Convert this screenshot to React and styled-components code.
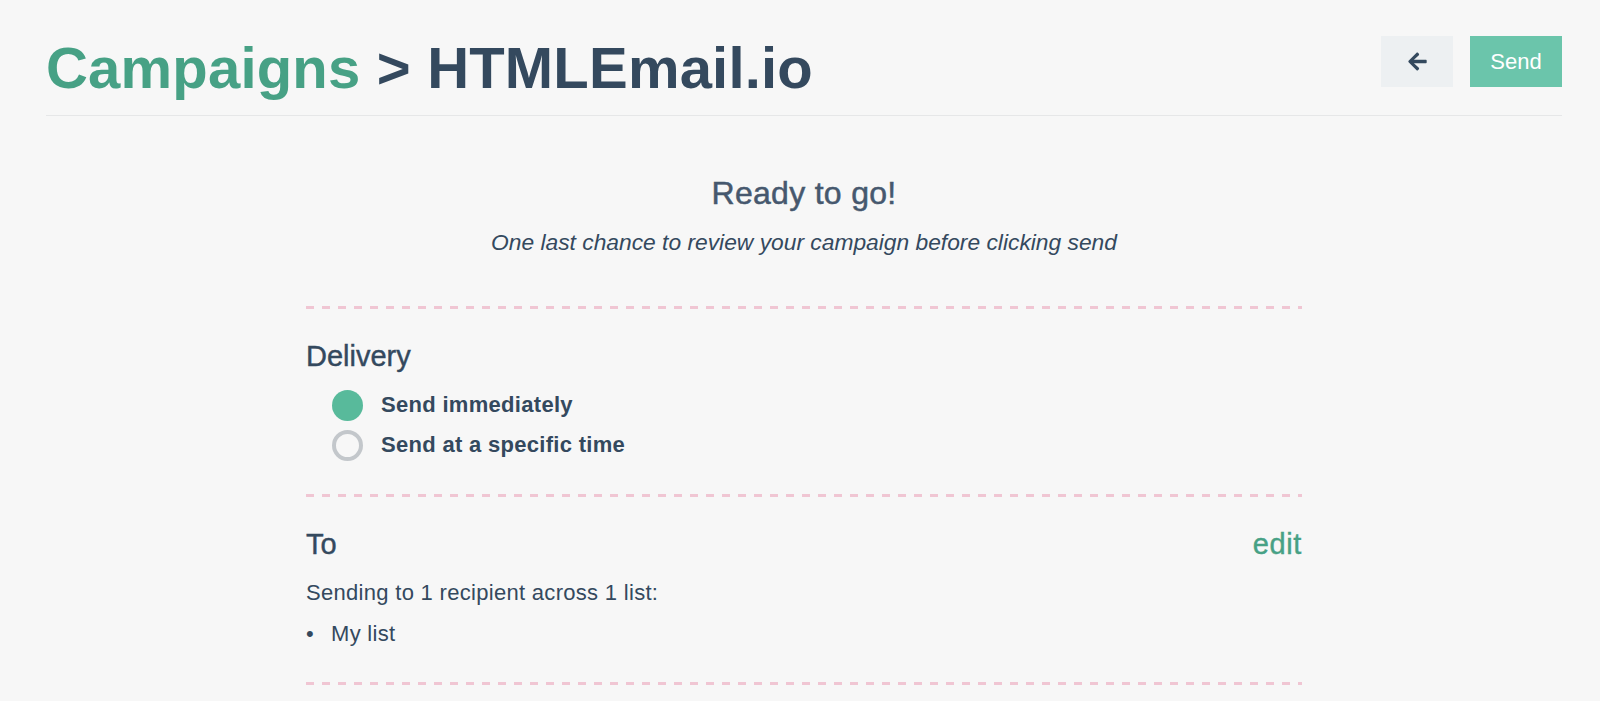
import React from "react";
import styled, { createGlobalStyle } from "styled-components";
import { FaArrowLeft } from "react-icons/fa";

const GlobalStyle = createGlobalStyle`
  html, body {
    margin: 0;
    padding: 0;
    background: #f7f7f7;
    font-family: "Liberation Sans", Arial, Helvetica, sans-serif;
    color: #34495e;
  }
  * { box-sizing: border-box; }
`;

const Page = styled.div`
  padding: 0 38px 0 46px;
  min-height: 701px;
`;

const Header = styled.header`
  display: flex;
  justify-content: space-between;
  align-items: flex-start;
  padding: 36px 0 15px;
  border-bottom: 1px solid #e6e7e8;
`;

const Title = styled.h1`
  margin: 0;
  font-size: 58px;
  line-height: 64px;
  font-weight: 700;
  color: #34495e;
  letter-spacing: 0.2px;
`;

const Crumb = styled.span`
  color: #47a185;
`;

const Actions = styled.div`
  display: flex;
  gap: 17px;
`;

const Button = styled.button`
  height: 51px;
  border: none;
  border-radius: 0;
  display: flex;
  align-items: center;
  justify-content: center;
  font-family: inherit;
  font-size: 22px;
  cursor: pointer;
  padding: 0;
  width: ${(p) => p.$w}px;
  background: ${(p) => (p.$primary ? "#6bc5ab" : "#edf0f2")};
  color: ${(p) => (p.$primary ? "#ffffff" : "#34495e")};
`;

const Main = styled.main`
  width: 996px;
  margin: 0 auto;
`;

const Intro = styled.div`
  text-align: center;
  padding: 59px 0 50px;
`;

const ReadyHeading = styled.h2`
  margin: 0;
  font-size: 32px;
  line-height: 36px;
  font-weight: 400;
  color: #46586e;
  letter-spacing: 0.3px;
  -webkit-text-stroke: 0.5px #46586e;
`;

const Subtitle = styled.p`
  margin: 17px 0 0;
  font-size: 22.8px;
  line-height: 28px;
  font-style: italic;
  color: #34495e;
`;

const dashes = `
  repeating-linear-gradient(
    to right,
    #f0c6d3 0,
    #f0c6d3 8px,
    transparent 8px,
    transparent 16px
  )
`;

const Section = styled.section`
  padding: 34px 0 ${(p) => p.$pb}px;
  background-image: ${dashes};
  background-size: 100% 3px;
  background-repeat: no-repeat;
  background-position: 0 0;
`;

const FinalRule = styled.div`
  height: 3px;
  background-image: ${dashes};
`;

const SectionHead = styled.div`
  display: flex;
  justify-content: space-between;
  align-items: baseline;
`;

const SectionTitle = styled.h3`
  margin: 0;
  font-size: 29px;
  line-height: 32px;
  font-weight: 400;
  color: #34495e;
  -webkit-text-stroke: 0.4px #34495e;
`;

const EditLink = styled.a`
  font-size: 29px;
  line-height: 32px;
  color: #47a185;
  text-decoration: none;
  letter-spacing: 0.6px;
  -webkit-text-stroke: 0.4px #47a185;
`;

const RadioList = styled.div`
  margin-top: 13px;
  padding-left: 26px;
`;

const RadioRow = styled.label`
  display: flex;
  align-items: center;
  height: 40px;
  gap: 18px;
  font-size: 22px;
  font-weight: 700;
  letter-spacing: 0.3px;
  color: #34495e;
`;

const RadioDot = styled.span`
  width: 31px;
  height: 31px;
  border-radius: 50%;
  flex: none;
  background: ${(p) => (p.$checked ? "#58ba9b" : "transparent")};
  border: ${(p) => (p.$checked ? "none" : "4px solid #c3c7cb")};
`;

const BodyText = styled.p`
  margin: 19px 0 0;
  font-size: 22px;
  line-height: 28px;
  letter-spacing: 0.3px;
  color: #34495e;
`;

const List = styled.ul`
  list-style: none;
  margin: 13px 0 0;
  padding: 0;
`;

const ListItem = styled.li`
  display: flex;
  font-size: 22px;
  line-height: 28px;
  letter-spacing: 0.3px;
  color: #34495e;
  &::before {
    content: "•";
    width: 25px;
    flex: none;
  }
`;

export default function App() {
  return (
    <>
      <GlobalStyle />
      <Page>
        <Header>
          <Title>
            <Crumb>Campaigns</Crumb> &gt; HTMLEmail.io
          </Title>
          <Actions>
            <Button $w={72} aria-label="Back">
              <FaArrowLeft size={21} />
            </Button>
            <Button $w={92} $primary>
              Send
            </Button>
          </Actions>
        </Header>
        <Main>
          <Intro>
            <ReadyHeading>Ready to go!</ReadyHeading>
            <Subtitle>
              One last chance to review your campaign before clicking send
            </Subtitle>
          </Intro>
          <Section $pb={29}>
            <SectionTitle>Delivery</SectionTitle>
            <RadioList>
              <RadioRow>
                <RadioDot $checked />
                Send immediately
              </RadioRow>
              <RadioRow>
                <RadioDot />
                Send at a specific time
              </RadioRow>
            </RadioList>
          </Section>
          <Section $pb={34}>
            <SectionHead>
              <SectionTitle>To</SectionTitle>
              <EditLink href="#">edit</EditLink>
            </SectionHead>
            <BodyText>Sending to 1 recipient across 1 list:</BodyText>
            <List>
              <ListItem>My list</ListItem>
            </List>
          </Section>
          <FinalRule />
        </Main>
      </Page>
    </>
  );
}
